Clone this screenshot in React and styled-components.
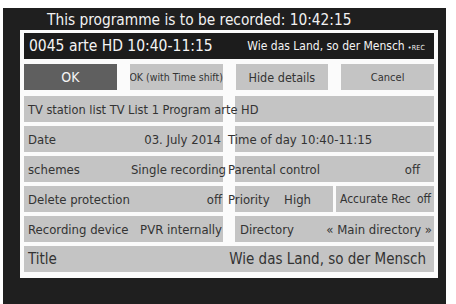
import React from 'react';
import styled, { createGlobalStyle } from 'styled-components';

const GlobalStyle = createGlobalStyle`
  html, body {
    margin: 0;
    padding: 0;
    background: #ffffff;
  }
  body {
    font-family: 'Liberation Sans Narrow', 'DejaVu Sans Condensed', 'Liberation Sans', sans-serif;
  }
`;

const Frame = styled.div`
  margin: 8px 0 0 3px;
  width: 443px;
  height: 296px;
  background: #1f1f1f;
  box-sizing: border-box;
  padding-top: 3px;
`;

const Heading = styled.div`
  height: 19px;
  padding-left: 44px;
  color: #f2f2f2;
  font-size: 15.3px;
  line-height: 19px;
  white-space: nowrap;
`;

const Panel = styled.div`
  margin-left: 17px;
  width: 418px;
  box-sizing: border-box;
  background: #fbfbfb;
  padding: 3px 4px 6px;
  display: flex;
  flex-direction: column;
`;

const Header = styled.div`
  height: 26px;
  background: #1c1c1c;
  color: #f4f4f4;
  display: flex;
  align-items: center;
  justify-content: space-between;
  padding: 0 9px 0 5px;
  white-space: nowrap;
`;

const Channel = styled.span`
  font-size: 15.5px;
`;

const Show = styled.span`
  font-size: 12px;
`;

const Rec = styled.span`
  font-size: 7px;
  margin-left: 3px;
  letter-spacing: 0.2px;
`;

const ButtonRow = styled.div`
  margin-top: 5px;
  display: grid;
  grid-template-columns: repeat(4, minmax(0, 1fr));
  column-gap: 13px;
`;

const Button = styled.div`
  height: 26px;
  display: flex;
  align-items: center;
  justify-content: center;
  background: ${({ $active }) => ($active ? '#5f5f5f' : '#c4c4c4')};
  color: ${({ $active }) => ($active ? '#f4f4f4' : '#333333')};
  font-size: ${({ $size }) => $size || 11}px;
  white-space: nowrap;
  overflow: hidden;
`;

const Rows = styled.div`
  margin-top: 6px;
  display: flex;
  flex-direction: column;
  gap: 4px;
`;

const Row = styled.div`
  display: grid;
  grid-template-columns: 199px 199px;
  column-gap: 12px;
  height: 26px;
`;

const Cell = styled.div`
  background: #c4c4c4;
  color: #333333;
  display: flex;
  align-items: center;
  justify-content: space-between;
  padding: 0 ${({ $pr }) => ($pr === undefined ? 4 : $pr)}px 0 ${({ $pl }) => ($pl === undefined ? 4 : $pl)}px;
  font-size: ${({ $size }) => $size || 13}px;
  white-space: nowrap;
  min-width: 0;

  & > span {
    position: relative;
    z-index: 1;
  }
`;

const Split = styled.div`
  display: grid;
  grid-template-columns: 98px 98px;
  column-gap: 3px;
`;

const Bleed = styled.span`
  margin-left: ${({ $by }) => -($by || 7)}px;
`;

const TitleRow = styled.div`
  height: 26px;
  background: #c4c4c4;
  color: #333333;
  display: flex;
  align-items: center;
  justify-content: space-between;
  padding: 0 8px 0 4px;
  font-size: 15px;
  white-space: nowrap;
`;

export default function App() {
  return (
    <>
      <GlobalStyle />
      <Frame>
        <Heading>This programme is to be recorded: 10:42:15</Heading>
        <Panel>
          <Header>
            <Channel>0045 arte HD 10:40-11:15</Channel>
            <Show>
              Wie das Land, so der Mensch<Rec>•REC</Rec>
            </Show>
          </Header>
          <ButtonRow>
            <Button $active $size={14}>OK</Button>
            <Button $size={10.5}>OK (with Time shift)</Button>
            <Button $size={12.5}>Hide details</Button>
            <Button>Cancel</Button>
          </ButtonRow>
          <Rows>
            <Row>
              <Cell $size={12.7}>
                <span>TV station list TV List 1 Program arte HD</span>
              </Cell>
              <Cell />
            </Row>
            <Row>
              <Cell $pr={2}>
                <span>Date</span>
                <span>03. July 2014</span>
              </Cell>
              <Cell $pl={0}>
                <Bleed>Time of day 10:40-11:15</Bleed>
              </Cell>
            </Row>
            <Row>
              <Cell $pr={0}>
                <span>schemes</span>
                <span style={{ marginRight: -3 }}>Single recording</span>
              </Cell>
              <Cell $pl={0} $pr={14}>
                <Bleed>Parental control</Bleed>
                <span>off</span>
              </Cell>
            </Row>
            <Row>
              <Cell $pr={1}>
                <span>Delete protection</span>
                <span>off</span>
              </Cell>
              <Split>
                <Cell $pl={0} $pr={22}>
                  <Bleed>Priority</Bleed>
                  <span>High</span>
                </Cell>
                <Cell $pr={3} $size={12}>
                  <span>Accurate Rec</span>
                  <span>off</span>
                </Cell>
              </Split>
            </Row>
            <Row>
              <Cell $pr={1}>
                <span>Recording device</span>
                <span>PVR internally</span>
              </Cell>
              <Cell $pl={5} $pr={2}>
                <span>Directory</span>
                <span>« Main directory »</span>
              </Cell>
            </Row>
            <TitleRow>
              <span>Title</span>
              <span>Wie das Land, so der Mensch</span>
            </TitleRow>
          </Rows>
        </Panel>
      </Frame>
    </>
  );
}
